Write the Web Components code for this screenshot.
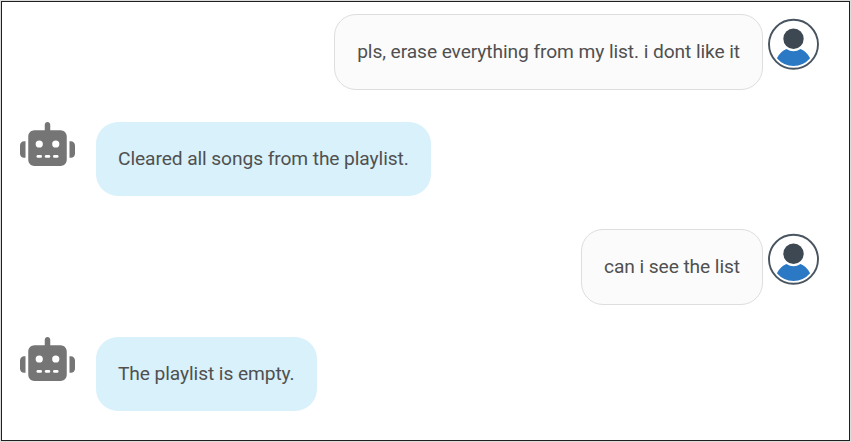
<!DOCTYPE html>
<html lang="en">
<head>
<meta charset="utf-8">
<title>Playlist chat</title>
<style>
html, body { margin: 0; height: 100%; }
body { background: #dcdcdc; font-family: Roboto, sans-serif; }
</style>
</head>
<body>
<chat-window>
  <chat-message from="user">pls, erase everything from my list. i dont like it</chat-message>
  <chat-message from="bot">Cleared all songs from the playlist.</chat-message>
  <chat-message from="user">can i see the list</chat-message>
  <chat-message from="bot">The playlist is empty.</chat-message>
</chat-window>
<script>
class ChatWindow extends HTMLElement {
  constructor() {
    super();
    this.attachShadow({ mode: 'open' }).innerHTML = `
      <style>
        :host { display: block; box-sizing: border-box; height: 100vh; padding: 1px; }
        main { box-sizing: border-box; height: 100%; background: #fff; border: 1px solid #1f1f1f;
          padding: 12px 30px 0 18px; display: flex; flex-direction: column; gap: 32.25px; }
      </style>
      <main><slot></slot></main>`;
  }
}

class RobotAvatar extends HTMLElement {
  constructor() {
    super();
    this.attachShadow({ mode: 'open' }).innerHTML = `
      <style>
        :host { display: block; width: 55px; height: 44px; color: #757575; }
        svg { display: block; width: 100%; height: 100%; }
      </style>
      <svg viewBox="0 0 640 512" fill="currentColor" aria-hidden="true">
        <path d="M320 0c17.7 0 32 14.3 32 32V96H472c39.8 0 72 32.2 72 72V440c0 39.8-32.2 72-72 72H168c-39.8 0-72-32.2-72-72V168c0-39.8 32.2-72 72-72H288V32c0-17.7 14.3-32 32-32z"/>
        <path d="M48 224H64V416H48c-26.5 0-48-21.5-48-48V272c0-26.5 21.5-48 48-48zM592 224c26.5 0 48 21.5 48 48v96c0 26.5-21.5 48-48 48H576V224z"/>
        <g fill="#fff">
          <circle cx="224" cy="256" r="42"/><circle cx="416" cy="256" r="42"/>
          <rect x="192" y="384" width="64" height="32" rx="16"/>
          <rect x="288" y="384" width="64" height="32" rx="16"/>
          <rect x="384" y="384" width="64" height="32" rx="16"/>
        </g>
      </svg>`;
  }
}

class UserAvatar extends HTMLElement {
  constructor() {
    super();
    this.attachShadow({ mode: 'open' }).innerHTML = `
      <style>
        :host { display: block; width: 51px; height: 52px; }
        svg { display: block; width: 100%; height: 100%; }
      </style>
      <svg viewBox="0 0 51 52" aria-hidden="true">
        <circle cx="25.5" cy="26.3" r="24.5" fill="#fff" stroke="#485460" stroke-width="1.9"/>
        <path d="M8.900 40.300Q12.400 33.200 18.400 31Q25.500 35.400 32.600 31Q38.600 33.200 42.100 40.300Q35.400 48 25.500 48T8.900 40.300Z" fill="#2b78c5"/>
        <circle cx="25.5" cy="20.7" r="10.2" fill="#3d4852"/>
      </svg>`;
  }
}

class ChatMessage extends HTMLElement {
  constructor() {
    super();
    const user = this.getAttribute('from') === 'user';
    this.attachShadow({ mode: 'open' }).innerHTML = `
      <style>
        :host { display: flex; align-items: flex-start; flex: none; }
        .bubble { box-sizing: border-box; height: 74px; padding: 0 22px; border-radius: 22px;
          background: #d8f1fb; color: #505050; font-size: 19.2px; letter-spacing: -.09px;
          line-height: 74px; white-space: nowrap; }
        robot-avatar { margin-right: 21px; }
        :host([from=user]) { justify-content: flex-end; }
        :host([from=user]) .bubble { height: 76px; border: 1px solid #dedede; background: #fbfbfb; }
        user-avatar { margin: 4px 0 0 5px; }
      </style>
      ${user ? '' : '<robot-avatar></robot-avatar>'}
      <div class="bubble"><slot></slot></div>
      ${user ? '<user-avatar></user-avatar>' : ''}`;
  }
}

customElements.define('robot-avatar', RobotAvatar);
customElements.define('user-avatar', UserAvatar);
customElements.define('chat-message', ChatMessage);
customElements.define('chat-window', ChatWindow);
</script>
</body>
</html>
